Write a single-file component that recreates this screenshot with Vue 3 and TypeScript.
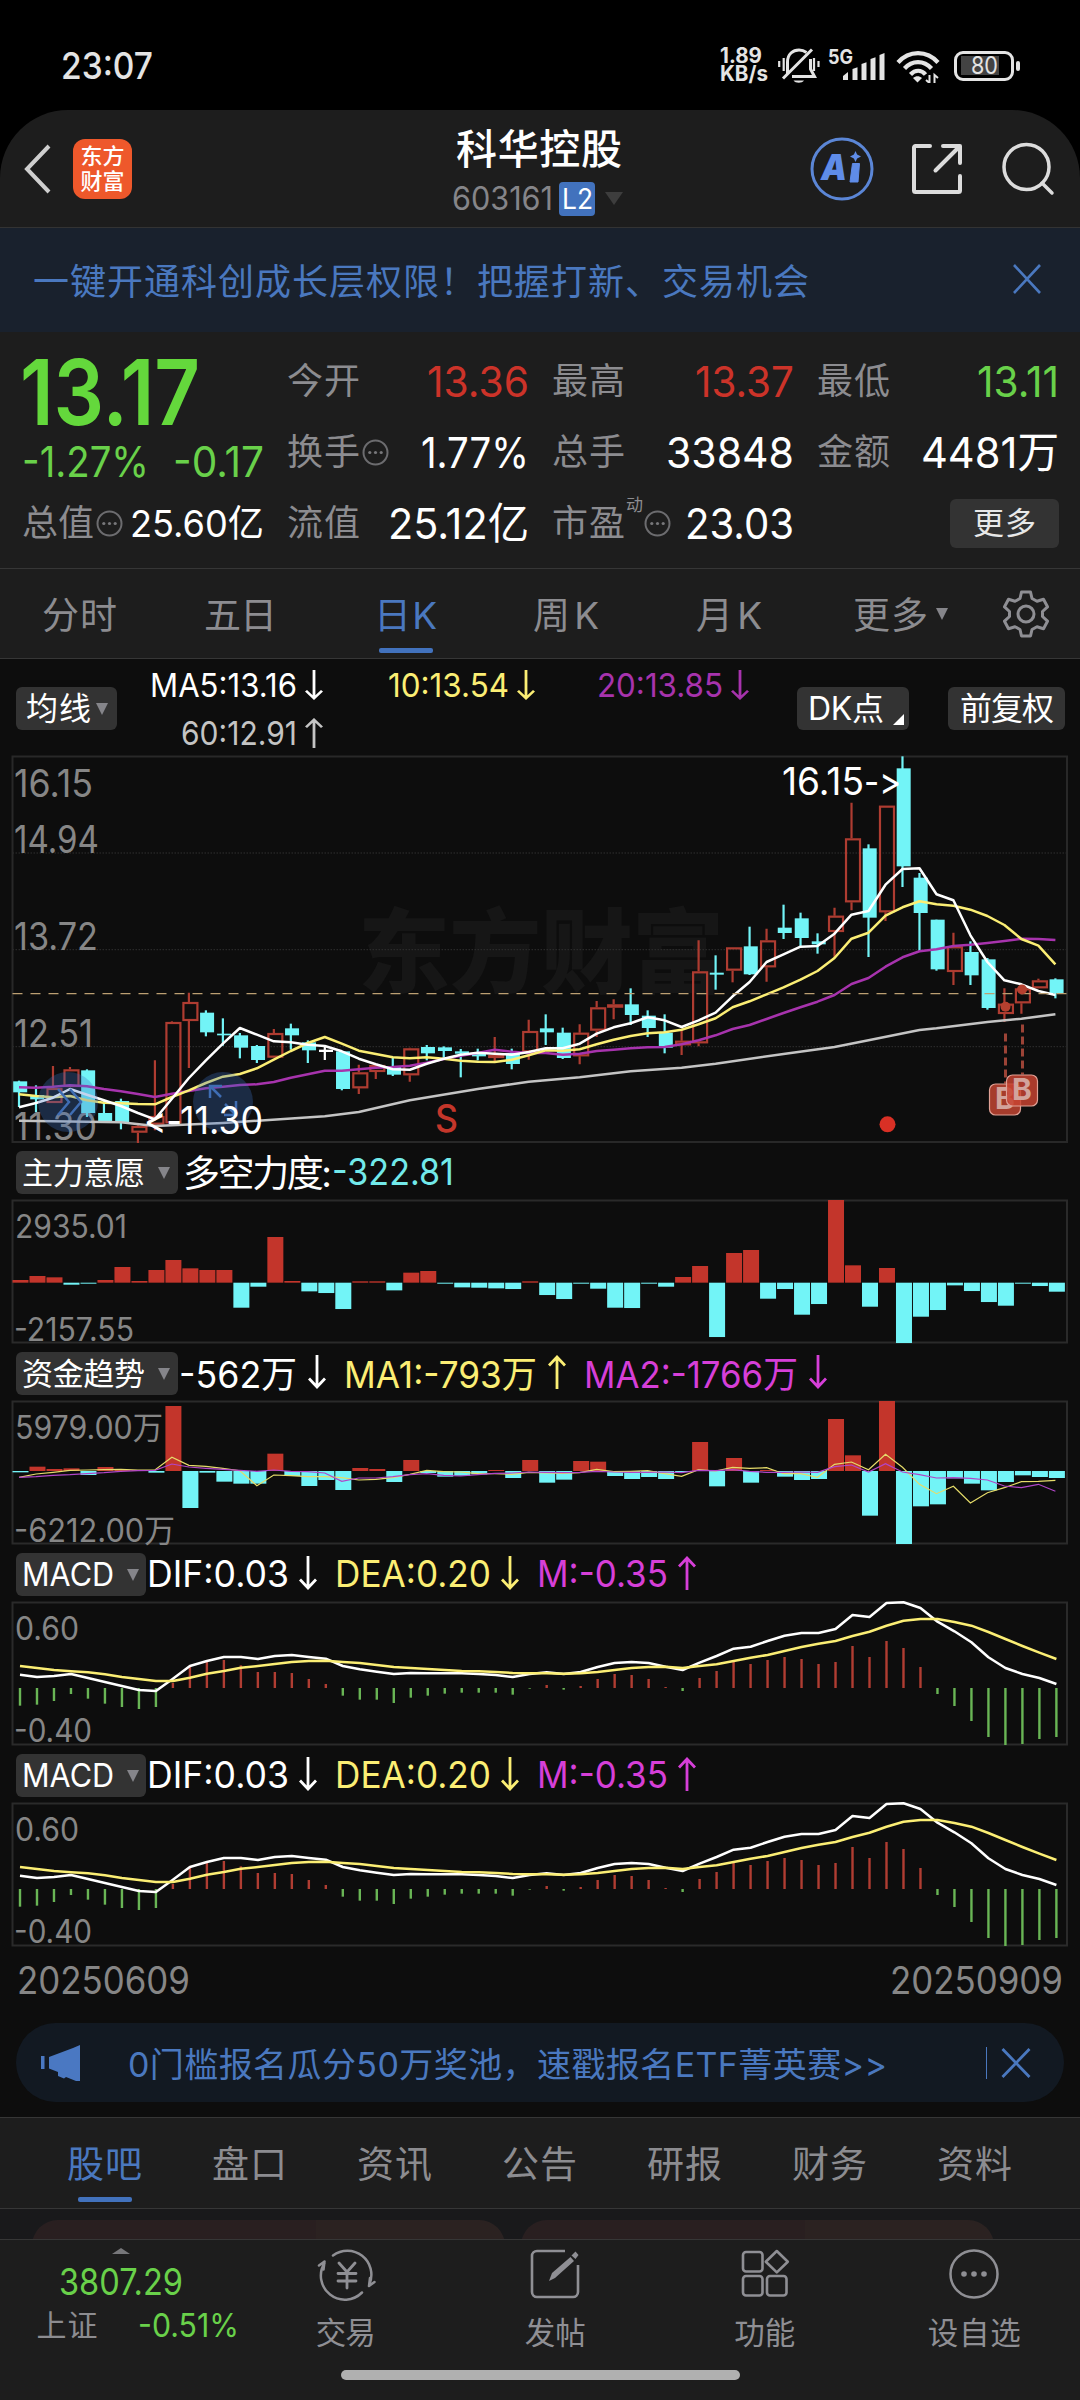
<script setup lang="ts">
import { h } from 'vue'

type Kind = 'r' | 'c' | 'w'
type Candle = [Kind, number, number, number, number]

// Fits an element to the given width: figures are condensed, Chinese text is letter-spaced.
const vFit = {
  mounted(el: HTMLElement, binding: { value: number }) {
    const text = el.textContent ?? ''
    const natural = el.getBoundingClientRect().width
    const count = Array.from(text).length
    if (/[0-9A-Z]/.test(text) && count < 12 && !/[日周月点]/.test(text)) {
      el.style.display = 'block'
      el.style.transformOrigin = '0 50%'
      el.style.transform = `scaleX(${binding.value / natural})`
      el.style.width = `${natural}px`
      el.style.marginRight = `${binding.value - natural}px`
    } else {
      const spacing = (binding.value - natural) / Math.max(count - 1, 1)
      el.style.letterSpacing = `${spacing}px`
      el.style.marginRight = `${-spacing}px`
    }
  },
}

const Arrow = (props: { up?: boolean; small?: boolean }) =>
  h(
    'svg',
    { width: 18, height: props.small ? 30 : 34, viewBox: '0 0 18 34', preserveAspectRatio: 'none', style: 'display:block;flex:none' },
    [
      h('path', {
        d: props.up ? 'M9 34V2M1 10.5L9 2l8 8.5' : 'M9 0v32M1 23.5L9 32l8-8.5',
        fill: 'none',
        stroke: 'currentColor',
        'stroke-width': 2.8,
      }),
    ],
  )
Arrow.props = { up: Boolean, small: Boolean }

const Info = () =>
  h('svg', { width: 27, height: 27, viewBox: '0 0 27 27', style: 'display:block;flex:none' }, [
    h('circle', { cx: 13.5, cy: 13.5, r: 12, fill: 'none', stroke: '#6c6c6f', 'stroke-width': 2 }),
    ...[7.8, 13.5, 19.2].map((cx) => h('circle', { cx, cy: 13.5, r: 1.6, fill: '#77777a' })),
  ])

// Chart units are thirds of a pixel, measured down from each chart's origin.
const STEP = 16.99
const slotX = (i: number) => 12.5 + i * STEP
const lineOf = (values: number[], top: number, x0 = 19) =>
  values.map((v, i) => `${(x0 + i * STEP).toFixed(1)},${((v - top) / 3).toFixed(1)}`).join(' ')

const PRICE_TOP = 317
const py = (v: number) => (v - PRICE_TOP) / 3
const candles: Candle[] = [
  ['c', 1291, 1293, 1326, 1370], ['c', 1305, 1334, 1347, 1385], ['r', 1247, 1313, 1358, 1358], ['r', 1250, 1257, 1310, 1310],
  ['c', 1257, 1260, 1388, 1400], ['c', 1350, 1388, 1412, 1412], ['c', 1345, 1352, 1416, 1437], ['r', 1425, 1427, 1447, 1478],
  ['r', 1230, 1397, 1423, 1440], ['r', 1113, 1115, 1419, 1419], ['r', 1027, 1055, 1112, 1253], ['c', 1080, 1087, 1146, 1158],
  ['c', 1104, 1150, 1155, 1186], ['c', 1148, 1155, 1192, 1224], ['c', 1184, 1187, 1229, 1238], ['r', 1136, 1148, 1222, 1222],
  ['c', 1120, 1134, 1155, 1198], ['c', 1170, 1176, 1200, 1238], ['w', 1190, 1198, 1205, 1229], ['c', 1203, 1203, 1316, 1320],
  ['r', 1243, 1266, 1314, 1331], ['r', 1240, 1244, 1265, 1286], ['c', 1222, 1250, 1273, 1277], ['r', 1192, 1194, 1275, 1294],
  ['c', 1184, 1190, 1209, 1230], ['c', 1188, 1191, 1202, 1222], ['c', 1196, 1203, 1210, 1281], ['c', 1195, 1210, 1218, 1230],
  ['r', 1160, 1214, 1222, 1232], ['c', 1195, 1208, 1241, 1257], ['r', 1108, 1142, 1206, 1228], ['c', 1092, 1134, 1146, 1184],
  ['c', 1132, 1147, 1223, 1226], ['r', 1122, 1147, 1218, 1242], ['r', 1052, 1071, 1141, 1160], ['r', 1047, 1062, 1072, 1107],
  ['c', 1014, 1062, 1094, 1124], ['c', 1080, 1096, 1133, 1160], ['c', 1092, 1147, 1192, 1209], ['r', 1140, 1171, 1185, 1214],
  ['r', 870, 963, 1179, 1188], ['c', 915, 967, 973, 1018], ['r', 891, 891, 961, 996], ['c', 829, 888, 972, 974],
  ['r', 835, 870, 951, 994], ['c', 763, 832, 848, 866], ['c', 787, 804, 863, 890], ['c', 849, 873, 882, 910],
  ['r', 772, 796, 845, 920], ['r', 457, 564, 756, 780], ['c', 582, 594, 802, 920], ['r', 466, 466, 786, 812],
  ['c', 318, 354, 648, 710], ['c', 668, 682, 788, 905], ['c', 808, 808, 957, 961], ['r', 847, 888, 965, 1004],
  ['c', 873, 905, 975, 1004], ['c', 923, 927, 1073, 1078], ['r', 1014, 1060, 1091, 1115], ['r', 1004, 1014, 1059, 1090],
  ['r', 985, 990, 1014, 1014], ['c', 984, 987, 1029, 1044],
]
const inkOf: Record<Kind, string> = { r: '#ae3c31', c: '#72f4f7', w: '#ffffff' }

const ma5 = [1371, 1358, 1342, 1316, 1333, 1350, 1367, 1388, 1407, 1345, 1283, 1230, 1180, 1133, 1153, 1173, 1176, 1183, 1187, 1203, 1225, 1242, 1257, 1258, 1240, 1225, 1213, 1207, 1210, 1213, 1205, 1194, 1194, 1180, 1150, 1131, 1119, 1101, 1110, 1130, 1110, 1087, 1038, 995, 935, 912, 889, 887, 850, 793, 782, 703, 656, 654, 732, 750, 855, 935, 990, 1002, 1022, 1034]
const ma10 = [1332, 1337, 1341, 1337, 1350, 1357, 1359, 1361, 1362, 1340, 1320, 1298, 1279, 1271, 1254, 1228, 1202, 1178, 1160, 1180, 1201, 1211, 1221, 1224, 1221, 1225, 1231, 1234, 1235, 1228, 1215, 1200, 1201, 1197, 1182, 1168, 1157, 1149, 1146, 1138, 1122, 1104, 1071, 1053, 1032, 1011, 988, 962, 923, 865, 847, 796, 771, 753, 762, 766, 778, 797, 824, 866, 886, 942]
const ma20 = [1311, 1312, 1309, 1305, 1308, 1316, 1323, 1331, 1340, 1330, 1322, 1314, 1309, 1304, 1302, 1295, 1282, 1272, 1261, 1261, 1257, 1252, 1250, 1246, 1237, 1226, 1216, 1208, 1198, 1204, 1208, 1208, 1213, 1210, 1202, 1198, 1194, 1191, 1190, 1182, 1170, 1155, 1136, 1124, 1106, 1088, 1071, 1054, 1034, 1001, 983, 949, 921, 903, 897, 887, 883, 878, 872, 865, 866, 869]
const ma60Points: [number, number][] = [[0, 1411], [6, 1416], [8, 1427], [12, 1418], [18, 1398], [20, 1385], [23, 1350], [27, 1316], [30, 1294], [33, 1281], [36, 1263], [39, 1252], [41, 1240], [45, 1211], [48, 1190], [50, 1170], [53, 1139], [54, 1134], [57, 1115], [59, 1105], [61, 1092]]
const ma60 = ma60Points.map(([i, v]) => `${(19 + i * STEP).toFixed(1)},${py(v).toFixed(1)}`).join(' ')

const priceLabels = [
  { t: '16.15', y: 40.5, w: 79 },
  { t: '14.94', y: 97, w: 85 },
  { t: '13.72', y: 194, w: 84 },
  { t: '12.51', y: 290.5, w: 79 },
  { t: '11.30', y: 383.5, w: 83 },
]

const force = [8, 20, 16, -6, -3, 8, 47, 5, 38, 68, 43, 38, 38, -75, -12, 137, 5, -26, -31, -79, 4, 4, -23, 30, 35, -3, -14, -15, -17, -19, 4, -37, -49, -3, -18, -75, -76, -3, -12, 17, 50, -163, 89, 98, -48, -19, -96, -64, 248, 52, -72, 44, -181, -102, -82, -8, -25, -58, -69, -3, -10, -27]
const fund = [-4, 13, 6, 8, -12, 12, 3, 3, -5, 195, -111, -5, -32, -38, -38, 52, -15, -45, -27, -57, 9, 6, -33, 33, -6, -17, -14, -10, 3, -21, 33, -35, -26, 30, 28, -15, -24, -18, -24, -3, 87, -46, 39, -35, 3, -17, -27, -24, 156, 47, -134, 210, -219, -106, -100, -22, -38, -58, -33, -13, -18, -21]
const fundMa1 = [1012, 1002, 997, 991, 990, 989, 988, 990, 990, 952, 976, 979, 985, 992, 1037, 1005, 1007, 1010, 1010, 1013, 1020, 1018, 1013, 1003, 991, 995, 996, 1001, 1001, 1003, 997, 999, 1000, 998, 988, 995, 994, 992, 1001, 1009, 989, 993, 982, 985, 983, 1001, 1001, 1012, 973, 966, 989, 943, 982, 1033, 1061, 1039, 1089, 1058, 1043, 1025, 1024, 1021]
const fundMa2 = [1012, 1010, 1006, 1004, 1001, 998, 994, 992, 991, 972, 981, 985, 988, 991, 994, 990, 994, 995, 999, 1024, 1014, 1014, 1010, 1004, 1001, 1006, 1008, 1004, 1000, 999, 996, 997, 998, 997, 994, 996, 997, 997, 996, 998, 991, 992, 989, 994, 997, 997, 996, 997, 980, 975, 996, 971, 996, 1004, 1014, 1013, 1015, 1020, 1038, 1043, 1033, 1054]
const macd = [-53, -50, -39, -18, -32, -47, -57, -63, -57, 15, 67, 84, 84, 68, 48, 48, 45, 27, 12, -23, -35, -35, -45, -29, -23, -17, -14, -14, -14, -20, -2, 9, -5, 6, 27, 42, 39, 27, 3, -9, 30, 51, 80, 72, 84, 93, 87, 72, 78, 126, 93, 141, 120, 63, -18, -54, -99, -147, -171, -168, -153, -147]
const dif = [404, 411, 408, 402, 414, 426, 438, 450, 453, 416, 378, 363, 351, 351, 357, 348, 345, 351, 356, 378, 388, 395, 402, 399, 400, 400, 400, 402, 405, 411, 402, 397, 402, 396, 381, 369, 366, 369, 380, 390, 368, 348, 326, 320, 303, 287, 279, 279, 267, 225, 231, 189, 187, 204, 245, 274, 307, 352, 384, 402, 414, 432]
const dea = [378, 384, 390, 394, 397, 403, 411, 417, 423, 423, 413, 401, 393, 383, 378, 372, 366, 363, 362, 366, 369, 375, 381, 384, 387, 390, 393, 394, 396, 399, 400, 400, 401, 400, 396, 390, 384, 381, 380, 384, 378, 373, 363, 353, 345, 333, 321, 311, 303, 288, 275, 257, 242, 237, 237, 246, 257, 276, 297, 318, 338, 357]

const periods = [
  { t: '分时', w: 75, ml: 42 },
  { t: '五日', w: 73, ml: 87 },
  { t: '日K', w: 63, ml: 97, on: true },
  { t: '周K', w: 66, ml: 96 },
  { t: '月K', w: 66, ml: 97 },
  { t: '更多', w: 75, ml: 91 },
]
const sections = ['股吧', '盘口', '资讯', '公告', '研报', '财务', '资料']
</script>

<template>
  <div class="screen">
    <div class="status">
      <span class="clock" v-fit="92">23:07</span>
      <div class="speed"><span v-fit="42">1.89</span><span v-fit="48">KB/s</span></div>
      <svg class="bell" width="42" height="36" viewBox="0 0 42 36" fill="none" stroke="#e4e4e4">
        <path d="M9.5 26V14C9.500 6 15 2 21 2c3 0 5.500 1 7.500 2.500M32.500 11v10l4 7.500H14" stroke-width="3" />
        <path d="M5 30.500L34 1.500" stroke-width="3" />
        <path d="M15.500 32.500c2 3 8.500 3 10.500 0z" fill="#e4e4e4" stroke="none" />
        <path d="M5.700 10v13M1.200 13v6M36 10v13M40.500 13v6" stroke-width="2.200" />
      </svg>
      <div class="cell">
        <span class="g5" v-fit="25">5G</span>
        <svg width="42" height="27" viewBox="0 0 42 27" fill="#e4e4e4">
          <path d="M0 27v-4l5-4v8zM9.500 27V16l5-1.800V27zM18.500 27V11l5-1.800V27zM27.500 27V6l5-1.800V27zM36.500 27V2l5-2v27z" />
        </svg>
      </div>
      <svg class="wifi" width="44" height="33" viewBox="0 0 44 33" fill="none" stroke="#e4e4e4" stroke-width="4.200">
        <path d="M2 12.500C13 0 31 0 42 12.500M8.500 18.500c7.500-8.500 19.500-8.500 27 0M14.500 24.500c4.500-5 11-5 15 0" />
        <path d="M17 28c3-2.500 6-2.500 9 0l-4.500 4.500z" fill="#e4e4e4" stroke="none" />
        <path d="M33.500 25v8l-3.500-3M38.500 33v-8l3.500 3" stroke-width="2" />
      </svg>
      <div class="battery"><span v-fit="27">80</span></div>
      <i class="knob"></i>
    </div>

    <div class="app">
      <header class="header">
        <svg class="back" width="30" height="52" viewBox="0 0 30 52" fill="none" stroke="#cfcfcf" stroke-width="4"><path d="M27 3L5 26l22 23" /></svg>
        <div class="logo"><span>东方</span><span>财富</span></div>
        <div class="title">
          <div class="name" v-fit="166">科华控股</div>
          <div class="code">
            <span class="digits" v-fit="101">603161</span><span class="l2"><span v-fit="31">L2</span></span><i class="tri"></i>
          </div>
        </div>
        <svg class="ai" width="64" height="64" viewBox="0 0 64 64">
          <circle cx="32" cy="32" r="30" fill="none" stroke="#5b86d6" stroke-width="3" />
          <text x="11" y="43" textLength="26" lengthAdjust="spacingAndGlyphs" font-family="Inter, Roboto, sans-serif" font-weight="900" font-style="italic" font-size="36" fill="#5f8ce8">A</text>
          <path d="M42.500 26.500h7l-1.500 18.500h-8z" fill="#5f8ce8" stroke="#5f8ce8" stroke-linejoin="round" />
          <path d="M45.500 14l1.600 3.600 3.900 1.900-3.900 1.900-1.600 3.600-1.600-3.600-3.900-1.900 3.900-1.900z" fill="#5f8ce8" />
        </svg>
        <svg class="share" width="52" height="52" viewBox="0 0 52 52" fill="none" stroke="#dcdcdc" stroke-width="4" stroke-linecap="round" stroke-linejoin="round">
          <path d="M19 3H4.500A1.500 1.500 0 0 0 3 4.500v43A1.500 1.500 0 0 0 4.500 49h43a1.500 1.500 0 0 0 1.500-1.500V33M32 3h17v17M48 4L24.500 27.500" />
        </svg>
        <svg class="search" width="54" height="54" viewBox="0 0 54 54" fill="none" stroke="#dcdcdc" stroke-width="3.500" stroke-linecap="round">
          <circle cx="25.500" cy="25" r="22.500" /><path d="M41 41l10 10" />
        </svg>
      </header>

      <div class="notice">
        <span v-fit="776">一键开通科创成长层权限！把握打新、交易机会</span>
        <svg width="30" height="32" viewBox="0 0 30 32" stroke="#4a78bf" stroke-width="2.600"><path d="M2 2l26 28M28 2L2 30" /></svg>
      </div>

      <section class="quote">
        <div class="col first">
          <div class="price"><span v-fit="180">13.17</span></div>
          <div class="change"><span v-fit="127">-1.27%</span><span v-fit="91">-0.17</span></div>
          <div class="cell-row"><b v-fit="72">总值</b><Info class="info" /><em class="small" v-fit="134">25.60亿</em></div>
        </div>
        <div class="col">
          <div class="cell-row"><b v-fit="73">今开</b><em class="red" v-fit="102">13.36</em></div>
          <div class="cell-row"><b v-fit="73">换手</b><Info class="info" /><em v-fit="108">1.77%</em></div>
          <div class="cell-row"><b v-fit="73">流值</b><em v-fit="141">25.12亿</em></div>
        </div>
        <div class="col">
          <div class="cell-row"><b v-fit="73">最高</b><em class="red" v-fit="99">13.37</em></div>
          <div class="cell-row"><b v-fit="73">总手</b><em v-fit="128">33848</em></div>
          <div class="cell-row"><b v-fit="73">市盈</b><sup>动</sup><Info /><em v-fit="109">23.03</em></div>
        </div>
        <div class="col">
          <div class="cell-row"><b v-fit="73">最低</b><em class="green" v-fit="82">13.11</em></div>
          <div class="cell-row"><b v-fit="73">金额</b><em v-fit="138">4481万</em></div>
          <div class="cell-row"><span class="more"><span v-fit="63">更多</span></span></div>
        </div>
      </section>

      <nav class="periods">
        <div v-for="p in periods" :key="p.t" class="period" :class="{ on: p.on }" :style="{ marginLeft: p.ml + 'px', width: p.w + 'px' }">
          <span v-fit="p.w">{{ p.t }}</span>
        </div>
        <i class="tri-sm"></i>
        <svg class="gear" width="46" height="48" viewBox="0 0 46 48" fill="none" stroke="#8f8f94" stroke-width="3" stroke-linejoin="round">
          <path d="M18.500 2h9l1.500 6.500 5 2.800 6.500-2 4 7.500-5 4.700v5l5 4.700-4 7.500-6.500-2-5 2.800L27.500 46h-9L17 39.500l-5-2.800-6.500 2-4-7.500 5-4.700v-5l-5-4.700 4-7.500 6.500 2 5-2.800z" />
          <circle cx="23" cy="24" r="8" />
        </svg>
      </nav>

      <main class="charts">
        <div class="ma-row">
          <span class="pill avg"><span v-fit="65">均线</span><i class="tri-sm"></i></span>
          <div class="ma-list">
            <div class="ma-line">
              <span class="m1" v-fit="147">MA5:13.16</span><Arrow small class="a1" />
              <span class="yellow m2" v-fit="121">10:13.54</span><Arrow small class="a1 yellow" />
              <span class="purple m3" v-fit="126">20:13.85</span><Arrow small class="a1 purple" />
            </div>
            <div class="ma-line grey"><span class="m4" v-fit="116">60:12.91</span><Arrow up small class="a1" /></div>
          </div>
          <span class="pill dk"><span v-fit="76">DK点</span><i class="corner"></i></span>
          <span class="pill fq"><span v-fit="94">前复权</span></span>
        </div>

        <svg class="chart" width="1080" height="386" viewBox="0 0 1080 386">
          <text class="watermark" x="358" y="230" textLength="366">东方财富</text>
          <path d="M12.500 97h1054.500M12.500 193.700h1054.500M12.500 290.700h1054.500" stroke="#303030" stroke-dasharray="1.500 1.500" />
          <rect x="12.500" y="0.500" width="1054.500" height="385.500" fill="none" stroke="#282828" stroke-width="2" />
          <text v-for="l in priceLabels" :key="l.t" class="axis big" x="14" :y="l.y" :textLength="l.w" lengthAdjust="spacingAndGlyphs">{{ l.t }}</text>
          <g v-for="(c, i) in candles" :key="i">
            <template v-if="c[0] === 'r'">
              <path :d="`M${slotX(i) + 6.5} ${py(c[1])}V${py(c[2])}M${slotX(i) + 6.5} ${py(c[3])}V${py(c[4])}`" :stroke="inkOf.r" stroke-width="2.200" />
              <rect :x="slotX(i) + 1" :y="py(c[2]) + 1" width="14" :height="Math.max(py(c[3]) - py(c[2]) - 2, 1)" fill="none" :stroke="inkOf.r" stroke-width="2.200" />
            </template>
            <template v-else>
              <rect :x="slotX(i) + 5.4" :y="py(c[1])" width="2.200" :height="py(c[4]) - py(c[1])" :fill="inkOf[c[0]]" />
              <rect :x="slotX(i) + 0.7" :y="py(c[2])" width="14" :height="py(c[3]) - py(c[2])" :fill="inkOf[c[0]]" />
            </template>
          </g>
          <g fill="none" stroke-width="2.500" stroke-linejoin="round">
            <polyline :points="ma60" stroke="#c4c4c4" />
            <polyline :points="lineOf(ma20, PRICE_TOP)" stroke="#a733ad" />
            <polyline :points="lineOf(ma10, PRICE_TOP)" stroke="#fbee74" />
            <polyline :points="lineOf(ma5, PRICE_TOP)" stroke="#ffffff" />
          </g>
          <path d="M12.500 237.700H1067" stroke="#bc9f72" stroke-width="1.300" stroke-dasharray="10 8" />
          <g fill="#3d72c4" fill-opacity="0.300">
            <circle cx="68" cy="346" r="30" /><circle cx="223" cy="346" r="30" />
          </g>
          <g fill="none" stroke="#3f6db3" stroke-width="2.500">
            <path d="M58 333l11 13-11 13M70 333l11 13-11 13M210 342v-12h12M210 330l11 11M225 348l11 11M224 359h12v-14" />
          </g>
          <text class="mark" x="144" y="378" textLength="38" lengthAdjust="spacingAndGlyphs">&lt;-</text>
          <text class="mark" x="180" y="378" textLength="83" lengthAdjust="spacingAndGlyphs">11.30</text>
          <text class="mark" x="782" y="38.500" textLength="82" lengthAdjust="spacingAndGlyphs">16.15</text>
          <text class="mark" x="864" y="38.500" textLength="37" lengthAdjust="spacingAndGlyphs">-&gt;</text>
          <text x="435" y="376" class="sell" textLength="23" lengthAdjust="spacingAndGlyphs">S</text>
          <circle cx="887.500" cy="368.300" r="8" fill="#d93025" />
          <g stroke="#9c4336" stroke-width="3" stroke-dasharray="8 4"><path d="M1005.500 277.500v50M1022.500 268.500v50" /></g>
          <circle cx="1005.500" cy="250.700" r="5" fill="#b5402f" /><circle cx="1022" cy="233.500" r="5" fill="#b5402f" />
          <g stroke="#e0a196" stroke-width="1.200">
            <rect x="989.500" y="328" width="31" height="31" rx="6" fill="#a63c2c" />
            <text class="buy" x="995" y="353">B</text>
            <rect x="1006.500" y="319" width="31" height="31" rx="6" fill="#c74331" fill-opacity="0.850" />
            <text class="buy" x="1012" y="344">B</text>
          </g>
        </svg>

        <div class="ind-row">
          <span class="pill ind"><span v-fit="123">主力意愿</span><i class="tri-sm"></i></span>
          <span class="cn" v-fit="149">多空力度:</span><span class="cyan" v-fit="122">-322.81</span>
        </div>
        <svg class="chart" width="1080" height="143" viewBox="0 0 1080 143">
          <rect x="12.500" y="0.500" width="1054.500" height="142" fill="none" stroke="#2a2a2a" stroke-width="2" />
          <rect v-for="(v, i) in force" :key="i" :x="slotX(i)" :y="v > 0 ? (248 - v) / 3 : 82.7" width="16" :height="Math.abs(v) / 3" :fill="v > 0 ? '#c3352b' : '#72f4f7'" />
          <text class="axis" x="15" y="38" textLength="112" lengthAdjust="spacingAndGlyphs">2935.01</text>
          <text class="axis" x="14" y="141" textLength="120" lengthAdjust="spacingAndGlyphs">-2157.55</text>
        </svg>

        <div class="ind-row">
          <span class="pill ind"><span v-fit="123">资金趋势</span><i class="tri-sm"></i></span>
          <span class="lead" v-fit="118">-562万</span><Arrow class="a2" />
          <span class="yellow next" v-fit="193">MA1:-793万</span><Arrow up class="a2 yellow" />
          <span class="pink next" v-fit="214">MA2:-1766万</span><Arrow class="a2 pink" />
        </div>
        <svg class="chart" width="1080" height="143" viewBox="0 0 1080 143">
          <rect x="12.500" y="0.500" width="1054.500" height="142" fill="none" stroke="#2a2a2a" stroke-width="2" />
          <rect v-for="(v, i) in fund" :key="i" :x="slotX(i)" :y="v > 0 ? (210 - v) / 3 : 70" width="16" :height="Math.abs(v) / 3" :fill="v > 0 ? '#c3352b' : '#72f4f7'" />
          <g fill="none" stroke-width="1.200">
            <polyline :points="lineOf(fundMa1, 783)" stroke="#e6dc6a" />
            <polyline :points="lineOf(fundMa2, 783)" stroke="#b146c8" />
          </g>
          <text class="axis" x="15" y="38" textLength="148" lengthAdjust="spacingAndGlyphs">5979.00万</text>
          <text class="axis" x="14" y="141" textLength="161" lengthAdjust="spacingAndGlyphs">-6212.00万</text>
        </svg>

        <template v-for="n in 2" :key="n">
          <div class="ind-row">
            <span class="pill mac"><span v-fit="92">MACD</span><i class="tri-sm"></i></span>
            <span class="lead" v-fit="142">DIF:0.03</span><Arrow class="a3" />
            <span class="yellow next" v-fit="156">DEA:0.20</span><Arrow class="a3 yellow" />
            <span class="pink next" v-fit="131">M:-0.35</span><Arrow up class="a3 pink" />
          </div>
          <svg class="chart" width="1080" height="143" viewBox="0 0 1080 143">
            <rect x="12.500" y="0.500" width="1054.500" height="142" fill="none" stroke="#2a2a2a" stroke-width="2" />
            <rect v-for="(v, i) in macd" :key="i" :x="18.800 + i * STEP" :y="v > 0 ? (258 - v) / 3 : 86" width="2.400" :height="Math.abs(v) / 3" :fill="v > 0 ? '#b03d32' : '#69b555'" />
            <g fill="none" stroke-width="2.500" stroke-linejoin="round">
              <polyline :points="lineOf(dif, 186, 20)" stroke="#ffffff" />
              <polyline :points="lineOf(dea, 186, 20)" stroke="#fbee74" />
            </g>
            <text class="axis" x="15" y="38" textLength="64" lengthAdjust="spacingAndGlyphs">0.60</text>
            <text class="axis" x="14" y="139.500" textLength="78" lengthAdjust="spacingAndGlyphs">-0.40</text>
          </svg>
        </template>

        <div class="dates"><span v-fit="173">20250609</span><span v-fit="173">20250909</span></div>

        <div class="promo">
          <svg width="42" height="36" viewBox="0 0 42 36" fill="#4a78c2">
            <path d="M0 11h3.500v13H0zM8 12L32 3l7-3v36h-4l-10-4-2 1.500-6-2.500v-4l-9-3.500z" />
          </svg>
          <span class="promo-text" v-fit="759">0门槛报名瓜分50万奖池，速戳报名ETF菁英赛&gt;&gt;</span>
          <i class="bar"></i>
          <svg width="30" height="32" viewBox="0 0 30 32" stroke="#4a78bf" stroke-width="2.800"><path d="M1.500 2l27 28M28.500 2l-27 28" /></svg>
        </div>
      </main>

      <nav class="sections">
        <div v-for="(s, i) in sections" :key="s" class="section" :class="{ on: i === 0 }"><span v-fit="75">{{ s }}</span></div>
      </nav>
      <div class="cards"><div class="card"></div><div class="card"></div></div>

      <footer class="dock">
        <div class="index">
          <i class="up"></i>
          <div class="value"><span v-fit="124">3807.29</span></div>
          <div class="detail"><span class="sz" v-fit="61">上证</span><span class="pct" v-fit="101">-0.51%</span></div>
        </div>
        <div class="item">
          <svg width="60" height="54" viewBox="0 0 60 54" fill="none" stroke="#8f8f94" stroke-width="2.500" stroke-linecap="round" stroke-linejoin="round">
            <path d="M17 8.500A24 24 0 0 1 53.500 37M53 39l1-8M53 39l5.500-4M46 45.500A24 24 0 0 1 8.500 16M8.500 14.500l-1 8M8.500 14.500L3 18.500" />
            <path d="M23 16l8 9 8-9M31 25v16M22 26.500h18M22 34h18" stroke-width="2.800" />
          </svg>
          <span v-fit="60">交易</span>
        </div>
        <div class="item">
          <svg width="60" height="54" viewBox="0 0 60 54" fill="none" stroke="#8f8f94" stroke-width="2.600">
            <path d="M40 4H12a5 5 0 0 0-5 5v36a5 5 0 0 0 5 5h36a5 5 0 0 0 5-5V18" />
            <path d="M24 34l3-8 18.500-16 3.500 4L30 31zM46.500 8.500l4-4 3 3.500-3 4z" fill="#8f8f94" stroke="none" />
          </svg>
          <span v-fit="61">发帖</span>
        </div>
        <div class="item">
          <svg width="60" height="54" viewBox="0 0 60 54" fill="none" stroke="#8f8f94" stroke-width="2.600" stroke-linejoin="round">
            <rect x="8" y="5" width="19.500" height="19.500" rx="3" /><rect x="8" y="29" width="19.500" height="19.500" rx="3" /><rect x="32" y="29" width="19.500" height="19.500" rx="3" />
            <path d="M41.800 4l11 10.700-11 10.700-11-10.700z" />
          </svg>
          <span v-fit="61">功能</span>
        </div>
        <div class="item">
          <svg width="60" height="54" viewBox="0 0 60 54">
            <circle cx="30" cy="27" r="23.500" fill="none" stroke="#8f8f94" stroke-width="2.500" />
            <g fill="#8f8f94"><circle cx="20" cy="27" r="2.800" /><circle cx="30" cy="27" r="2.800" /><circle cx="40" cy="27" r="2.800" /></g>
          </svg>
          <span v-fit="93">设自选</span>
        </div>
      </footer>
      <div class="home"><i></i></div>
    </div>
  </div>
</template>

<style>
html,
body {
  background: #000;
}
</style>

<style scoped>
.screen {
  width: 1080px;
  height: 2400px;
  overflow: hidden;
  background: #000;
  color: #fff;
  font-family: Inter, 'Noto Sans CJK SC', sans-serif;
  font-weight: 400;
}
.screen * {
  box-sizing: border-box;
}
.screen span,
.screen em,
.screen b {
  white-space: nowrap;
  font-style: normal;
  font-weight: 400;
  flex: none;
}
.screen svg {
  display: block;
  flex: none;
}
.screen i {
  flex: none;
}
.yellow {
  color: #fbee74;
}
.purple {
  color: #a733ad;
}
.pink {
  color: #d63fd8;
}
.grey {
  color: #c4c4c4;
}
.red {
  color: #cc3329;
}
.green {
  color: #69d14a;
}
.cyan {
  color: #72e9ea;
}

.status {
  height: 110px;
  display: flex;
  align-items: flex-start;
  color: #e4e4e4;
}
.status .clock {
  font-size: 37px;
  line-height: 40px;
  margin: 46px 0 0 61px;
  font-weight: 500;
}
.speed {
  display: flex;
  flex-direction: column;
  align-items: flex-start;
  width: 50px;
  margin: 47px 0 0 567px;
  font-size: 21px;
  line-height: 18px;
}
.screen .speed span,
.screen .g5 {
  font-weight: 700;
}
.bell {
  margin: 48px 0 0 8px;
}
.cell {
  display: flex;
  align-items: flex-start;
  margin: 0 0 0 8px;
}
.g5 {
  margin-top: 46px;
  font-size: 20px;
  line-height: 22px;
}
.cell svg {
  margin: 53px 0 0 -10px;
}
.wifi {
  margin: 50px 0 0 11px;
}
.battery {
  width: 60px;
  height: 30px;
  margin: 51px 0 0 14px;
  border: 3px solid #e4e4e4;
  border-radius: 9px;
  padding: 2px;
  display: flex;
  justify-content: center;
  font-size: 24px;
  line-height: 20px;
  background: linear-gradient(90deg, #434343 38px, #000 38px) 4px 2px / 46px 19px no-repeat;
}
.knob {
  width: 4px;
  height: 10px;
  margin: 61px 0 0 2px;
  border-radius: 2px;
  background: #e4e4e4;
}

.app {
  height: 2290px;
  background: #1d1d1d;
  border-radius: 68px 68px 0 0;
  display: flex;
  flex-direction: column;
}
.header {
  height: 118px;
  border-bottom: 1px solid #333;
  display: flex;
  align-items: center;
}
.back {
  margin-left: 22px;
}
.logo {
  width: 59px;
  height: 60px;
  margin-left: 21px;
  border-radius: 12px;
  background: #ee582b;
  display: flex;
  flex-direction: column;
  align-items: center;
  justify-content: center;
  font-size: 22px;
  line-height: 25px;
}
.logo span {
  font-weight: 500;
}
.title {
  width: 300px;
  margin-left: 257px;
  padding-top: 10px;
  display: flex;
  flex-direction: column;
  align-items: center;
}
.name {
  font-size: 41px;
  line-height: 50px;
  font-weight: 500;
}
.code {
  display: flex;
  align-items: center;
  height: 50px;
  padding-right: 4px;
}
.digits {
  font-size: 32px;
  color: #858589;
}
.l2 {
  width: 36px;
  height: 34px;
  margin-left: 6px;
  padding-left: 3px;
  border-radius: 4px;
  background: #4272bd;
  font-size: 28px;
  line-height: 34px;
}
.tri {
  margin-left: 10px;
  border: 9.5px solid transparent;
  border-top: 13px solid #3d3d3d;
  border-bottom: 0;
}
.ai {
  margin-left: 121px;
}
.share {
  margin-left: 37px;
}
.search {
  margin-left: 38px;
}

.notice {
  height: 104px;
  padding: 0 38px 3px 33px;
  display: flex;
  align-items: center;
  justify-content: space-between;
  background: #19212d;
  color: #4a78bf;
  font-size: 36px;
}

.quote {
  height: 237px;
  border-bottom: 1px solid #363636;
  padding-left: 22px;
  display: flex;
  gap: 23px;
}
.col {
  width: 242px;
  padding-top: 14px;
}
.cell-row {
  height: 71px;
  display: flex;
  align-items: center;
  font-size: 43px;
  line-height: 71px;
}
.cell-row b {
  font-size: 36px;
  color: #8c8c90;
}
.cell-row em {
  margin-left: auto;
}
.cell-row .small {
  font-size: 37px;
}
.info {
  margin-left: 2px;
}
.cell-row sup {
  width: 19px;
  padding-left: 1px;
  font-size: 17px;
  line-height: 17px;
  color: #8c8c90;
  align-self: flex-start;
  margin-top: 9px;
}
.price {
  height: 92px;
  font-size: 91px;
  line-height: 92px;
  color: #64d83c;
}
.screen .price span {
  font-weight: 600;
  margin-left: -2px;
}
.change {
  height: 50px;
  display: flex;
  justify-content: space-between;
  font-size: 42px;
  line-height: 48px;
  color: #69d14a;
}
.more {
  width: 109px;
  height: 49px;
  margin-left: 133px;
  border-radius: 6px;
  background: #333;
  color: #e8e8e8;
  font-size: 31px;
  line-height: 48px;
  text-align: center;
}

.periods {
  height: 90px;
  border-bottom: 1px solid #363636;
  display: flex;
  align-items: center;
  color: #8c8c90;
  font-size: 37px;
}
.period {
  height: 90px;
  line-height: 93px;
  position: relative;
}
.on {
  color: #4a78bf;
}
.on::after {
  content: '';
  position: absolute;
  left: calc(50% - 27px);
  bottom: 6px;
  width: 54px;
  height: 5px;
  border-radius: 2px;
  background: #4272bd;
}
.tri-sm {
  border: 6.5px solid transparent;
  border-top: 12px solid #85858a;
  border-bottom: 0;
}
.periods .tri-sm {
  margin-left: 8px;
}
.gear {
  margin-left: 55px;
}

.charts {
  height: 1459px;
  background: #0d0d0d;
  border-bottom: 1px solid #363636;
  overflow: hidden;
}
.ma-row {
  height: 97px;
  display: flex;
  align-items: flex-start;
  font-size: 33px;
}
.pill {
  height: 43px;
  border-radius: 6px;
  background: #333;
  display: flex;
  align-items: center;
  font-size: 32px;
  line-height: 43px;
}
.ma-row .pill {
  margin-top: 28px;
}
.avg {
  width: 101px;
  margin-left: 16px;
  padding-left: 10px;
  gap: 5px;
}
.ma-list {
  width: 680px;
  padding-top: 2px;
}
.ma-line {
  height: 48px;
  display: flex;
  align-items: center;
}
.m1 {
  margin-left: 33px;
}
.a1 {
  margin-left: 8px;
}
.m2 {
  margin-left: 65px;
}
.m3 {
  margin-left: 62px;
}
.m4 {
  margin-left: 64px;
}
.dk {
  width: 112px;
  padding-left: 11px;
}
.corner {
  align-self: flex-end;
  margin: 0 0 5px 9px;
  border-bottom: 11px solid #fff;
  border-left: 11px solid transparent;
}
.fq {
  width: 117px;
  margin-left: 39px;
  padding-left: 12px;
}
.chart {
  overflow: visible;
}
.axis {
  font-size: 32px;
  fill: #868686;
}
.big,
.mark {
  font-size: 38px;
}
.mark {
  fill: #fff;
  font-feature-settings: 'calt' 0;
}
.watermark {
  font-family: 'Noto Sans CJK SC', sans-serif;
  font-weight: 900;
  font-size: 92px;
  fill: #161616;
}
.sell {
  font-size: 38px;
  font-weight: 500;
  fill: #c4362a;
}
.buy {
  font-size: 30px;
  font-weight: 700;
  fill: #d2a49c;
  stroke: none;
}
.ind-row {
  height: 58px;
  padding-left: 16px;
  display: flex;
  align-items: center;
  font-size: 37px;
}
.ind-row .pill {
  margin-top: 3px;
}
.cn {
  margin-left: 5px;
  font-size: 37px;
}
.lead {
  margin-left: 1px;
}
.ind,
.mac {
  padding-left: 6px;
  gap: 13px;
}
.ind-row .ind {
  width: 162px;
  font-size: 31px;
}
.ind-row .mac {
  width: 130px;
  font-size: 32px;
}
.a2 {
  margin-left: 11px;
}
.a3 {
  margin-left: 10px;
}
.next {
  margin-left: 18px;
}
.dates {
  height: 77px;
  padding: 17px 17px 0 17px;
  display: flex;
  justify-content: space-between;
  font-size: 38px;
  line-height: 34px;
  color: #868686;
}
.promo {
  width: 1048px;
  height: 79px;
  margin-left: 16px;
  padding: 0 33px 0 25px;
  border-radius: 40px;
  background: #121922;
  display: flex;
  align-items: center;
  color: #4a78bf;
  font-size: 34px;
}
.promo-text {
  margin-left: 45px;
}
.bar {
  width: 1px;
  height: 32px;
  margin: 0 14px 0 auto;
  background: #4a78bf;
}

.sections {
  height: 91px;
  padding-left: 32px;
  border-bottom: 1px solid #363636;
  display: flex;
  color: #8c8c90;
  font-size: 37px;
}
.section {
  width: 145px;
  height: 90px;
  display: flex;
  justify-content: center;
  line-height: 94px;
  position: relative;
}
.cards {
  height: 30px;
  padding: 11px 0 0 32px;
  background: #19191b;
  display: flex;
  gap: 16px;
  overflow: hidden;
}
.card {
  width: 473px;
  height: 60px;
  border-radius: 26px;
  background: linear-gradient(90deg, #291f20 60%, #2b2221 60%);
}
.dock {
  height: 131px;
  border-top: 1px solid #363636;
  display: flex;
}
.index {
  width: 241px;
  display: flex;
  flex-direction: column;
  align-items: center;
}
.up {
  margin-top: 8px;
  border: 9px solid transparent;
  border-bottom: 6px solid #77777a;
  border-top: 0;
}
.value {
  margin-top: 8px;
  font-size: 37px;
  line-height: 40px;
  color: #69d14a;
}
.detail {
  width: 202px;
  margin: 5px 0 0 34px;
  display: flex;
  justify-content: space-between;
  align-items: center;
  font-size: 33px;
  line-height: 36px;
}
.sz {
  font-size: 30px;
  color: #8c8c90;
}
.pct {
  color: #69d14a;
}
.item {
  width: 209.5px;
  padding-top: 7px;
  display: flex;
  flex-direction: column;
  align-items: center;
  font-size: 30.5px;
  line-height: 36px;
  color: #8f8f94;
}
.item span {
  margin-top: 14px;
}
.home {
  display: flex;
  justify-content: center;
}
.home i {
  width: 399px;
  height: 10px;
  border-radius: 5px;
  background: #b0b0b0;
}
</style>
